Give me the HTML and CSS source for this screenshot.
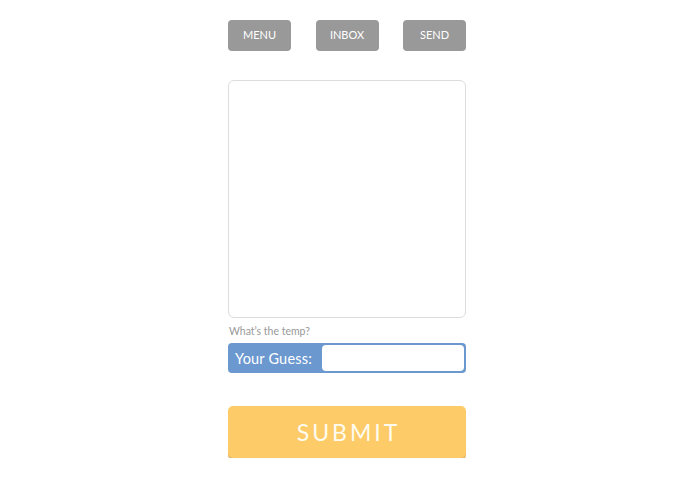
FILE: index.html
```html
<!DOCTYPE html>
<html>
<head>
<meta charset="utf-8">
<link rel="stylesheet" href="styles.css">
</head>
<body>
<div class="wrap">
  <nav class="nav">
    <button class="nav-btn">MENU</button>
    <button class="nav-btn">INBOX</button>
    <button class="nav-btn">SEND</button>
  </nav>
  <div class="display"></div>
  <div class="question">What’s the temp?</div>
  <div class="guess">
    <span class="guess-label">Your Guess:</span>
    <input class="guess-input" type="text">
  </div>
  <button class="submit">SUBMIT</button>
</div>
</body>
</html>
```
FILE: styles.css
```css
html, body {
  margin: 0;
  padding: 0;
  background: #ffffff;
}
.wrap {
  width: 238px;
  margin: 0 0 0 228px;
  padding-top: 20px;
  display: flex;
  flex-direction: column;
  font-family: Lato, "Open Sans", sans-serif;
}
.nav {
  display: flex;
  justify-content: space-between;
}
.nav-btn {
  width: 63px;
  height: 31px;
  border: none;
  border-radius: 4px;
  background: #999999;
  color: #ffffff;
  font-family: Lato, sans-serif;
  font-size: 11px;
  padding: 0 0 2px 0;
}
.display {
  margin-top: 29px;
  height: 236px;
  border: 1px solid #dddddd;
  border-radius: 6px;
}
.question {
  margin-top: 6px;
  padding-left: 1px;
  font-size: 10.5px;
  color: #999999;
  height: 14px;
  line-height: 14px;
}
.guess {
  margin-top: 5px;
  height: 30px;
  box-sizing: border-box;
  background: #6b98cf;
  border-radius: 4px;
  display: flex;
  align-items: center;
  padding: 2px;
}
.guess-label {
  flex: none;
  white-space: nowrap;
  color: #ffffff;
  font-size: 14.5px;
  padding-left: 5px;
  width: 87px;
  letter-spacing: 0.2px;
}
.guess-input {
  flex: 1;
  min-width: 0;
  height: 26px;
  box-sizing: border-box;
  border: none;
  border-radius: 4px;
  background: #ffffff;
  outline: none;
  padding: 0 4px;
}
.submit {
  margin-top: 33px;
  height: 52px;
  border: none;
  border-radius: 5px;
  background: #fdcb67;
  box-shadow: 0 2px 0 #d9b06a;
  color: #fffbef;
  font-family: Lato, sans-serif;
  font-size: 23px;
  letter-spacing: 3px;
  padding: 0 0 0 3px;
}
```
